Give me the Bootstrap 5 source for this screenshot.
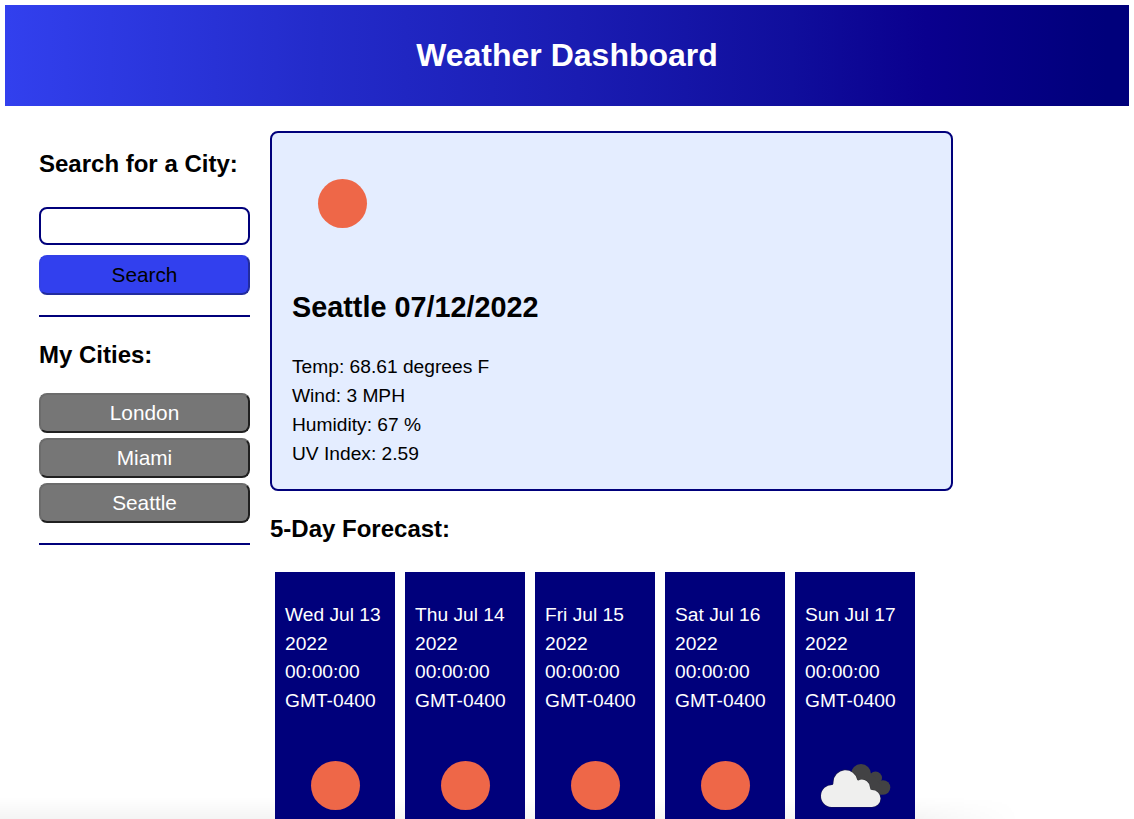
<!DOCTYPE html>
<html lang="en">
<head>
<meta charset="utf-8">
<meta name="viewport" content="width=device-width, initial-scale=1">
<title>Weather Dashboard</title>
<link href="https://cdn.jsdelivr.net/npm/bootstrap@5.3.0/dist/css/bootstrap.min.css" rel="stylesheet">
<style>
  body { font-family: "Liberation Sans", Arial, sans-serif; font-size: 19.2px; line-height: 28.8px; color: #000; background: #fff; }
  h1, h2, h3 { font-weight: 700; margin: 0; }
  h1 { font-size: 32px; line-height: 48px; }
  h2 { font-size: 28.8px; line-height: 43px; }
  h3 { font-size: 24px; line-height: 36px; }
  .page { height: 100vh; padding: 5px; }
  .banner { height: 101px; padding-bottom: 1px; color: #fff; background: linear-gradient(to right, #3240ee 0%, #232bca 28%, #1a1cb2 51%, #100e9c 70%, #0a008e 82%, #00007b 98%); }
  .content { padding: 25px 0 0 34px; gap: 20px; }
  .sidebar { width: 211px; padding-top: 15px; }
  .city-input { height: 38px; border: 2px solid #00007b; border-radius: 8px; margin: 25px 0 10px; }
  .city-btn { height: 40px; padding: 0; font-size: 20.8px; line-height: 36px; border: 2px solid; border-radius: 8px; color: #fff; background: #767676; border-color: #6c6c6c #202020 #202020 #6c6c6c; }
  .search-btn { color: #000; background: #3240ee; border-color: #3240e8 #222c9e #222c9e #3240e8; }
  .rule { height: 2px; background: #00007b; margin: 20px 0; }
  .my-cities { gap: 5px; padding-top: 20px; }
  .main-col { width: 683px; }
  .current { height: 360px; padding: 20px; line-height: 29px; background: #e4edff; border: 2px solid #00007b; border-radius: 8px; }
  .city-name { margin: 33px 0 23px; }
  .weather-icon { width: 100px; height: 100px; display: block; }
  .forecast-title { margin-top: 20px; }
  .forecast { padding: 25px 5px 0; gap: 10px; }
  .day { width: 120px; height: 330px; padding: 28.800px 9px 0 10px; background: #00007b; color: #fff; }
  .day .weather-icon { margin-top: 19px; }
  .bottom-shade { height: 22px; background: linear-gradient(to top, rgba(0,0,0,.045), transparent);
    -webkit-mask-image: linear-gradient(to right, #000 80%, transparent 90%); mask-image: linear-gradient(to right, #000 80%, transparent 90%); }
</style>
</head>
<body class="overflow-hidden">
<svg width="0" height="0" class="position-absolute" aria-hidden="true">
  <symbol id="sun" viewBox="0 0 100 100"><circle cx="50.500" cy="50.500" r="24.500" fill="#ee6748"/></symbol>
  <symbol id="clouds" viewBox="0 0 100 100">
    <g transform="translate(5 .5)">
      <g fill="#424244"><circle cx="51" cy="38.500" r="10"/><circle cx="65.500" cy="42.500" r="6.500"/><circle cx="73" cy="52" r="7.300"/><path d="M48 38H61L72 50V59H60L48 50Z"/></g>
      <path d="M21.500 71.500A11 11 0 0 1 22.500 49.500Q23.500 49.500 23.500 46.500A12 12 0 0 1 47.300 44.500Q48 45.500 50 44.300A8.300 8.300 0 0 1 60 52Q60 54.500 62 54.500A8.500 8.500 0 0 1 62 71.500Z" fill="#efefee" stroke="#2e2e33" stroke-width="1.200" paint-order="stroke" stroke-opacity=".55"/>
    </g>
  </symbol>
</svg>
<div class="page overflow-hidden position-relative">
  <header class="banner d-flex align-items-center justify-content-center"><h1>Weather Dashboard</h1></header>
  <div class="content d-flex align-items-start position-relative z-1">
    <aside class="sidebar flex-shrink-0">
      <h3>Search for a City:</h3>
      <input type="text" class="city-input form-control" aria-label="City">
      <button type="button" class="city-btn search-btn d-block w-100">Search</button>
      <div class="rule"></div>
      <h3>My Cities:</h3>
      <div class="my-cities d-flex flex-column">
        <button type="button" class="city-btn w-100">London</button>
        <button type="button" class="city-btn w-100">Miami</button>
        <button type="button" class="city-btn w-100">Seattle</button>
      </div>
      <div class="rule"></div>
    </aside>
    <main class="main-col flex-shrink-0">
      <section class="current">
        <svg class="weather-icon"><use href="#sun"/></svg>
        <h2 class="city-name">Seattle 07/12/2022</h2>
        <div>Temp: 68.61 degrees F</div>
        <div>Wind: 3 MPH</div>
        <div>Humidity: 67 %</div>
        <div>UV Index: 2.59</div>
      </section>
      <h3 class="forecast-title">5-Day Forecast:</h3>
      <section class="forecast d-flex">
        <div class="day">Wed Jul 13 2022 00:00:00 GMT-0400<svg class="weather-icon"><use href="#sun"/></svg></div>
        <div class="day">Thu Jul 14 2022 00:00:00 GMT-0400<svg class="weather-icon"><use href="#sun"/></svg></div>
        <div class="day">Fri Jul 15 2022 00:00:00 GMT-0400<svg class="weather-icon"><use href="#sun"/></svg></div>
        <div class="day">Sat Jul 16 2022 00:00:00 GMT-0400<svg class="weather-icon"><use href="#sun"/></svg></div>
        <div class="day">Sun Jul 17 2022 00:00:00 GMT-0400<svg class="weather-icon"><use href="#clouds"/></svg></div>
      </section>
    </main>
  </div>
  <div class="bottom-shade position-absolute bottom-0 start-0 w-100 z-0"></div>
</div>
<script src="https://cdn.jsdelivr.net/npm/bootstrap@5.3.0/dist/js/bootstrap.bundle.min.js"></script>
</body>
</html>
